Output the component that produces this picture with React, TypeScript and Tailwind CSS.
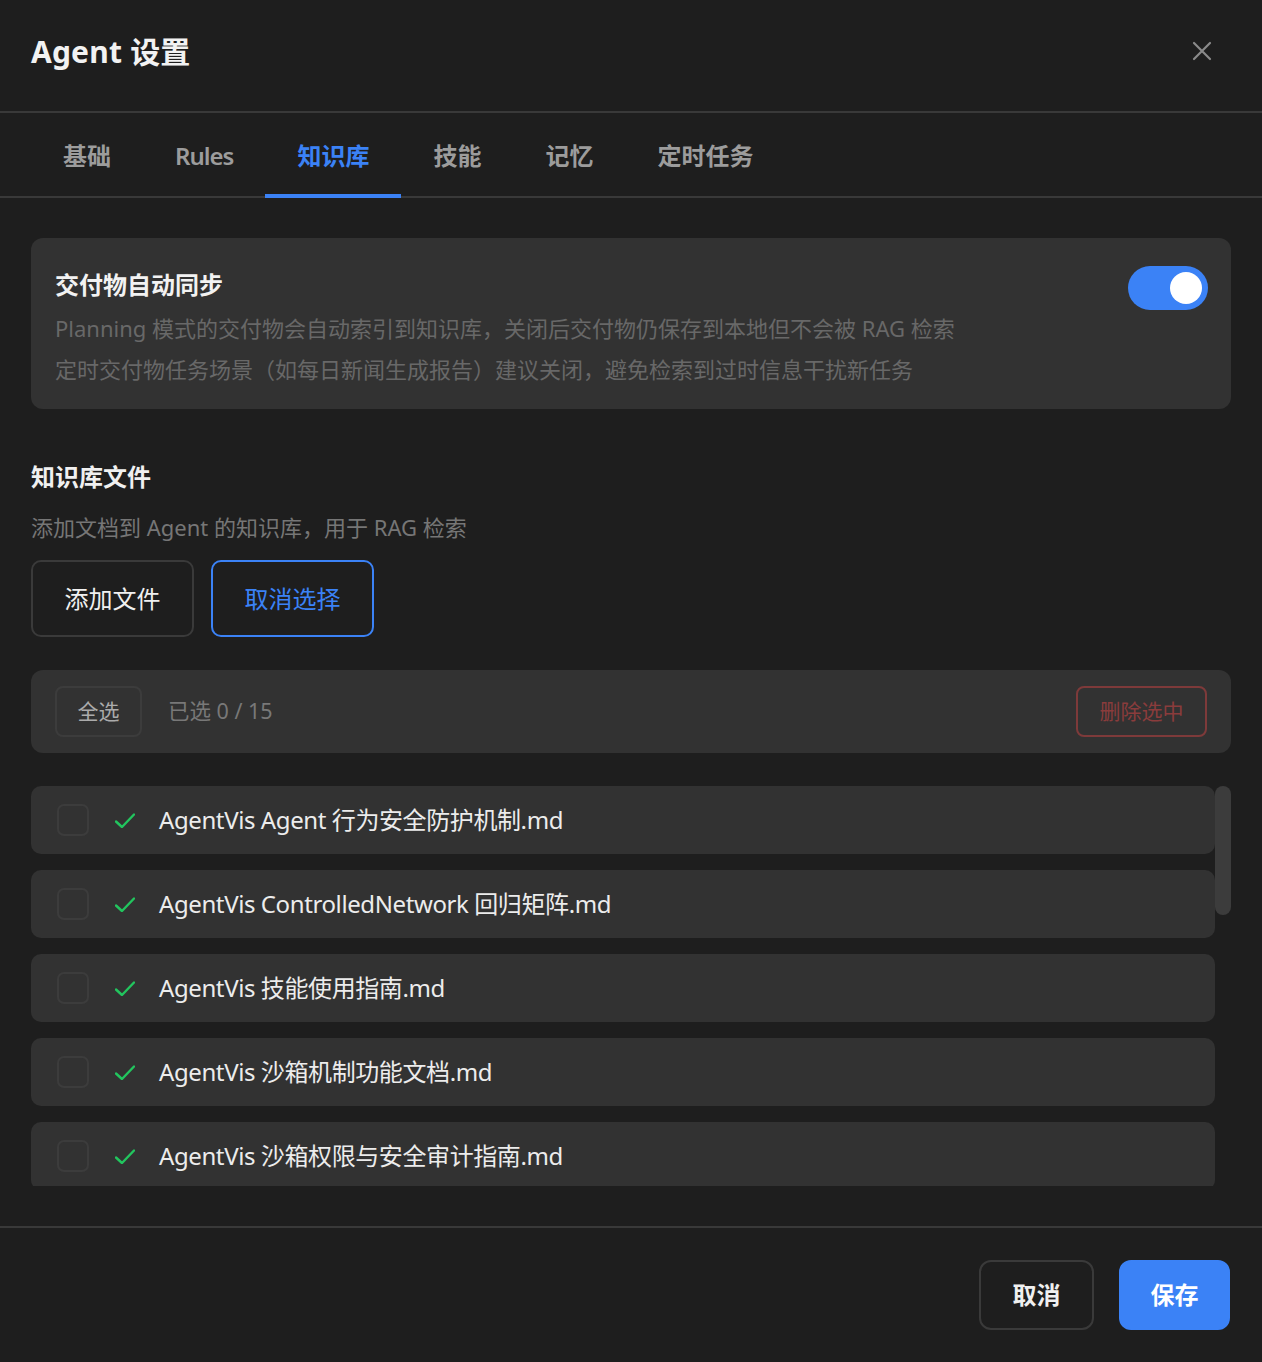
import React from "react";

const files = [
  "AgentVis Agent 行为安全防护机制.md",
  "AgentVis ControlledNetwork 回归矩阵.md",
  "AgentVis 技能使用指南.md",
  "AgentVis 沙箱机制功能文档.md",
  "AgentVis 沙箱权限与安全审计指南.md",
  "AgentVis 定时任务配置说明.md",
  "AgentVis 记忆系统设计.md",
  "AgentVis 知识库检索原理.md",
  "AgentVis 工具调用规范.md",
  "AgentVis 多智能体协作.md",
  "AgentVis 部署指南.md",
  "AgentVis 常见问题.md",
  "AgentVis 版本更新日志.md",
  "AgentVis 接口文档.md",
  "AgentVis 快速入门.md",
];

const tabs = ["基础", "Rules", "知识库", "技能", "记忆", "定时任务"];

function CheckMark() {
  return (
    <svg width="20" height="15" viewBox="0 0 20 15" fill="none">
      <path d="M1 8.5 L7 14 L19 1.5" stroke="#22c55e" strokeWidth="2.4" strokeLinecap="round" strokeLinejoin="round" />
    </svg>
  );
}

export default function App() {
  return (
    <div
      className="w-[1262px] h-[1362px] bg-[#1e1e1e] flex flex-col overflow-hidden"
      style={{ fontFamily: '"Noto Sans", "Noto Sans CJK SC", sans-serif' }}
    >
      {/* Header */}
      <div className="h-[113px] shrink-0 border-b-2 border-[#393939] flex items-start justify-between pl-[31px] pr-[50px] pt-[32px]">
        <h1 className="text-[30px] leading-[40px] font-bold text-[#f2f2f2] tracking-[0.2px]">Agent 设置</h1>
        <button className="mt-[9px] text-[#8a8a8a]">
          <svg width="20" height="20" viewBox="0 0 20 20" fill="none">
            <path d="M2 2 L18 18 M18 2 L2 18" stroke="currentColor" strokeWidth="2.2" strokeLinecap="round" />
          </svg>
        </button>
      </div>

      {/* Tabs */}
      <div className="h-[85px] shrink-0 border-b-2 border-[#393939] flex pl-[31px]">
        {tabs.map((t) => {
          const active = t === "知识库";
          return (
            <div
              key={t}
              className={`relative px-8 flex items-center pt-[3px] text-[24px] font-semibold ${
                active ? "text-[#3b82f6]" : "text-[#9c9c9c]"
              } ${t === "Rules" ? "tracking-[-1px]" : ""}`}
            >
              {t}
              {active && <div className="absolute left-0 right-0 bottom-[-2px] h-[4px] bg-[#3b82f6]" />}
            </div>
          );
        })}
      </div>

      {/* Content */}
      <div className="flex-1 min-h-0 flex flex-col px-[31px] pt-[40px] pb-[40px]">
        {/* Sync card */}
        <div className="h-[171px] shrink-0 bg-[#323232] rounded-[12px] flex justify-between pl-6 pr-[23px] pt-[28px]">
          <div className="flex flex-col">
            <div className="mt-[3px] text-[24px] leading-[32px] font-bold text-[#f2f2f2]">交付物自动同步</div>
            <div className="mt-[7px] text-[22px] leading-[41px] text-[#686868]">
              <p>Planning 模式的交付物会自动索引到知识库，关闭后交付物仍保存到本地但不会被 RAG 检索</p>
              <p>定时交付物任务场景（如每日新闻生成报告）建议关闭，避免检索到过时信息干扰新任务</p>
            </div>
          </div>
          <div className="w-[80px] h-[44px] rounded-full bg-[#3b82f6] flex items-center justify-end pr-[6px] shrink-0">
            <div className="w-[32px] h-[32px] rounded-full bg-white" />
          </div>
        </div>

        {/* Section */}
        <div className="mt-[52px] text-[24px] leading-[32px] font-bold text-[#f0f0f0]">知识库文件</div>
        <div className="mt-[19px] text-[22px] leading-[30px] text-[#767676]">添加文档到 Agent 的知识库，用于 RAG 检索</div>
        <div className="mt-[18px] flex gap-[17px]">
          <button className="w-[163px] h-[77px] rounded-[10px] border-2 border-[#3a3a3a] text-[24px] text-[#f0f0f0]">
            添加文件
          </button>
          <button className="w-[163px] h-[77px] rounded-[10px] border-2 border-[#3b82f6] text-[24px] text-[#3b82f6]">
            取消选择
          </button>
        </div>

        {/* Selection bar */}
        <div className="mt-[33px] h-[83px] shrink-0 bg-[#323232] rounded-[12px] flex items-center justify-between px-6">
          <div className="flex items-center gap-[26px]">
            <button className="w-[87px] h-[51px] rounded-[8px] border-2 border-[#3c3c3c] text-[21px] text-[#ababab]">
              全选
            </button>
            <span className="text-[21.5px] text-[#787878]">已选 0 / 15</span>
          </div>
          <button className="w-[131px] h-[51px] rounded-[8px] border-2 border-[#7e3a3a] text-[21px] text-[#8a3c3c]">
            删除选中
          </button>
        </div>

        {/* File list */}
        <div className="mt-[33px] flex-1 min-h-0 flex">
          <div className="flex-1 min-w-0 overflow-hidden flex flex-col gap-4">
            {files.map((f) => (
              <div key={f} className="h-[68px] shrink-0 bg-[#323232] rounded-[10px] flex items-center pl-[26px]">
                <div className="w-[32px] h-[32px] rounded-[7px] border-2 border-[#3c3c3c] shrink-0" />
                <div className="ml-[26px] flex items-center">
                  <CheckMark />
                </div>
                <span className="ml-[24px] text-[24px] tracking-[-0.4px] text-[#ececec]">{f}</span>
              </div>
            ))}
          </div>
          <div className="w-[16px] shrink-0">
            <div className="h-[129px] w-[16px] rounded-full bg-[#3c3c3c]" />
          </div>
        </div>
      </div>

      {/* Footer */}
      <div className="h-[136px] shrink-0 border-t-2 border-[#393939] flex items-start justify-end gap-[25px] pr-[32px] pt-[32px]">
        <button className="w-[115px] h-[70px] rounded-[12px] border-2 border-[#3a3a3a] text-[24px] font-bold text-[#f0f0f0]">
          取消
        </button>
        <button className="w-[111px] h-[70px] rounded-[12px] bg-[#3b82f6] text-[24px] font-bold text-white">
          保存
        </button>
      </div>
    </div>
  );
}
